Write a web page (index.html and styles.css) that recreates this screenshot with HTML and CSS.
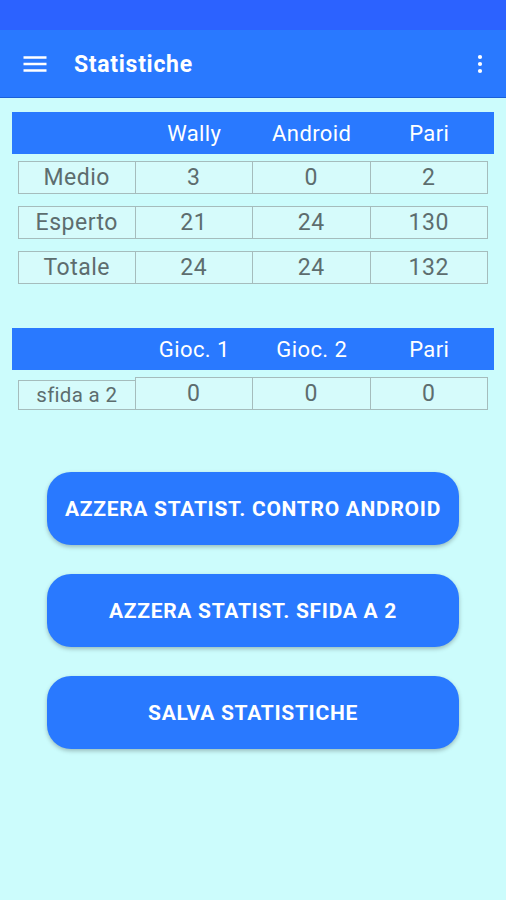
FILE: index.html
```html
<!DOCTYPE html>
<html lang="it">
  <head>
    <meta charset="UTF-8" />
    <meta name="viewport" content="width=device-width, initial-scale=1.0" />
    <title>Statistiche</title>
    <link rel="stylesheet" href="styles.css">
  </head>
  <body>
    <div class="status-bar"></div>
    <header class="app-bar">
      <svg class="menu-icon" width="24" height="24" viewBox="0 0 24 24">
        <path d="M0.5 5.5h23M0.5 12h23M0.5 18.5h23" stroke="#fff" stroke-width="2.4" fill="none" />
      </svg>
      <h1 class="title">Statistiche</h1>
      <svg class="more-icon" width="24" height="24" viewBox="0 0 24 24">
        <circle cx="12" cy="5" r="2.1" fill="#fff" />
        <circle cx="12" cy="12" r="2.1" fill="#fff" />
        <circle cx="12" cy="19" r="2.1" fill="#fff" />
      </svg>
    </header>

    <main class="content">
      <!-- contro Android -->
      <section class="stats">
        <div class="stats-head">
          <span></span>
          <span>Wally</span>
          <span>Android</span>
          <span>Pari</span>
        </div>
        <div class="stats-row">
          <span class="cell">Medio</span>
          <span class="cell">3</span>
          <span class="cell">0</span>
          <span class="cell">2</span>
        </div>
        <div class="stats-row">
          <span class="cell">Esperto</span>
          <span class="cell">21</span>
          <span class="cell">24</span>
          <span class="cell">130</span>
        </div>
        <div class="stats-row">
          <span class="cell">Totale</span>
          <span class="cell">24</span>
          <span class="cell">24</span>
          <span class="cell">132</span>
        </div>
      </section>

      <!-- sfida a 2 -->
      <section class="stats">
        <div class="stats-head">
          <span></span>
          <span>Gioc. 1</span>
          <span>Gioc. 2</span>
          <span>Pari</span>
        </div>
        <div class="stats-row">
          <span class="cell cell-short">sfida a 2</span>
          <span class="cell">0</span>
          <span class="cell">0</span>
          <span class="cell">0</span>
        </div>
      </section>

      <div class="actions">
        <button class="action">Azzera statist. contro Android</button>
        <button class="action">Azzera statist. sfida a 2</button>
        <button class="action">Salva statistiche</button>
      </div>
    </main>
  </body>
</html>
```

FILE: styles.css
```css
/* General Page Styling */
body {
  margin: 0;
  font-family: Roboto, "Liberation Sans", Arial, sans-serif;
  background-color: #ccfcfc;
  min-height: 100vh;
}

.status-bar {
  height: 30px;
  background-color: #2c62ff;
}

.app-bar {
  height: 67px;
  display: flex;
  align-items: center;
  padding: 0 14px 0 23px;
  background-color: #2979ff;
  border-bottom: 1px solid #1b5fd8;
  color: #fff;
}

.title {
  flex: 1;
  margin: 2px 0 0 27px;
  font-size: 23px;
  font-weight: 700;
  letter-spacing: 0.7px;
}

/* Tables */
.content {
  padding: 14px 12px 0;
}

.stats {
  margin-bottom: 44px;
}

.stats-head,
.stats-row {
  display: grid;
  grid-template-columns: repeat(4, 1fr);
  padding: 0 6px;
}

.stats-head {
  height: 42px;
  align-items: center;
  background-color: #2979ff;
  color: #fff;
  font-size: 22px;
  letter-spacing: 0.4px;
  text-align: center;
  margin-bottom: 7px;
}

.stats-row {
  margin-bottom: 12px;
}

.cell {
  height: 31px;
  line-height: 32px;
  text-align: center;
  font-size: 23px;
  letter-spacing: 0.5px;
  color: #5d6d6e;
  background-color: #d6fbfb;
  border: 1px solid #a5bcbc;
  margin-left: -1px;
}

.cell:first-child {
  margin-left: 0;
}

.cell-short {
  height: 28px;
  line-height: 29px;
  margin-top: 3px;
  font-size: 20.5px;
  letter-spacing: 0.3px;
  white-space: nowrap;
}

/* Buttons */
.actions {
  display: flex;
  flex-direction: column;
  align-items: center;
  gap: 29px;
  margin-top: 62px;
}

.action {
  width: 412px;
  height: 73px;
  border: none;
  border-radius: 24px;
  background-color: #2979ff;
  color: #fff;
  font-family: inherit;
  font-size: 21px;
  font-weight: 700;
  letter-spacing: 0.7px;
  text-transform: uppercase;
  box-shadow: 0 2px 4px rgba(0, 0, 0, 0.25);
  cursor: pointer;
}
```
